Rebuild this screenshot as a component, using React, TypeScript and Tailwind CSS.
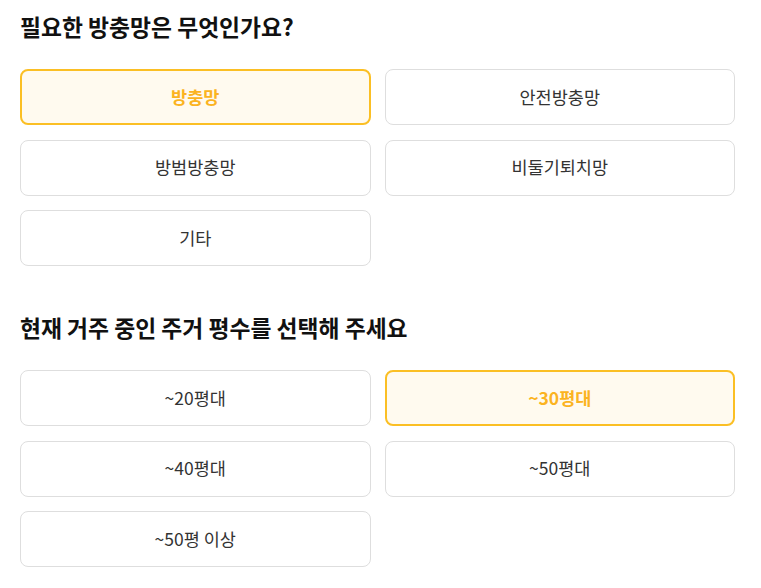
import React from "react";

const font = { fontFamily: '"Noto Sans CJK KR", "Noto Sans", sans-serif' };

function Option({ label, selected }: { label: string; selected?: boolean }) {
  return (
    <button
      className={
        selected
          ? "h-[56px] rounded-[8px] border-2 border-[#fbbf24] bg-[#fffaef] text-[17.5px] font-bold text-[#fbb321]"
          : "h-[56px] rounded-[8px] border border-[#dedede] bg-white text-[17.5px] text-[#333333]"
      }
    >
      {label}
    </button>
  );
}

function Section({ title, options, selected }: { title: string; options: string[]; selected: string }) {
  return (
    <section>
      <h2 className="h-[40px] text-[22.8px] font-bold leading-[40px] text-[#111111]">{title}</h2>
      <div className="mt-[22px] grid grid-cols-2 gap-x-[14px] gap-y-[14.5px]">
        {options.map((o) => (
          <Option key={o} label={o} selected={o === selected} />
        ))}
      </div>
    </section>
  );
}

export default function App() {
  return (
    <div className="w-[761px] bg-white" style={font}>
      <div className="flex w-[735px] flex-col gap-[42px] pb-[20px] pl-[20px] pt-[7px]">
        <Section
          title="필요한 방충망은 무엇인가요?"
          options={["방충망", "안전방충망", "방범방충망", "비둘기퇴치망", "기타"]}
          selected="방충망"
        />
        <Section
          title="현재 거주 중인 주거 평수를 선택해 주세요"
          options={["~20평대", "~30평대", "~40평대", "~50평대", "~50평 이상"]}
          selected="~30평대"
        />
      </div>
    </div>
  );
}
